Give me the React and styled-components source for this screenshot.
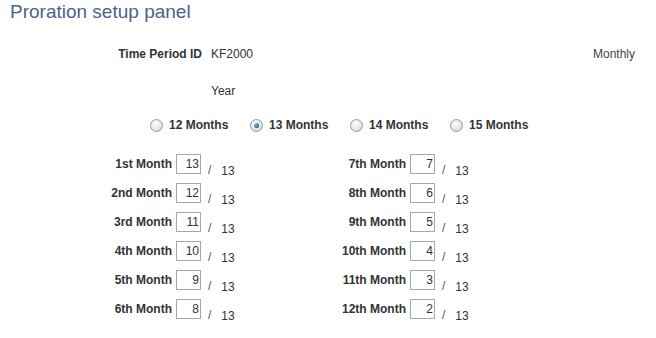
import React from "react";
import styled, { createGlobalStyle } from "styled-components";

const Global = createGlobalStyle`
  html, body { margin: 0; padding: 0; background: #fff; }
  body { font-family: Arial, "Liberation Sans", sans-serif; color: #333; }
`;

const Page = styled.div`
  width: 656px;
  height: 338px;
  box-sizing: border-box;
  padding: 1px 21px 0 10px;
`;

const Title = styled.h1`
  margin: 0;
  font-size: 19px;
  font-weight: normal;
  line-height: 22px;
  color: #4d618c;
`;

const InfoRow = styled.div`
  display: flex;
  align-items: center;
  height: 20px;
  margin-top: ${(p) => p.$top}px;
  font-size: 12px;
`;

const InfoLabel = styled.span`
  width: 192px;
  text-align: right;
  font-weight: bold;
  color: #333;
`;

const InfoValue = styled.span`
  margin-left: 9px;
  color: #333;
  flex: 1;
`;

const RightValue = styled.span`
  color: #444;
`;

const RadioRow = styled.div`
  display: flex;
  margin-top: 14px;
  padding-left: 140px;
  height: 20px;
  align-items: center;
`;

const RadioOption = styled.label`
  display: flex;
  align-items: center;
  width: 100px;
  font-size: 12px;
  font-weight: bold;
  color: #333;
`;

const RadioDot = styled.span`
  width: 11px;
  height: 11px;
  border-radius: 50%;
  border: 1px solid #9a9a9a;
  background: radial-gradient(circle at 40% 35%, #ffffff 0%, #e6e6e6 55%, #c8c8c8 100%);
  margin-right: 6px;
  display: flex;
  align-items: center;
  justify-content: center;
  box-sizing: content-box;
  &::after {
    content: "";
    display: ${(p) => (p.$checked ? "block" : "none")};
    width: 5px;
    height: 5px;
    border-radius: 50%;
    background: radial-gradient(circle at 35% 35%, #7fc4f2 0%, #1f6fb8 60%, #0b3f73 100%);
  }
`;

const MonthGrid = styled.div`
  display: grid;
  grid-template-columns: 234px 234px;
  grid-auto-flow: column;
  grid-template-rows: repeat(6, 29px);
  margin-top: 19px;
  padding-left: 90px;
`;

const MonthCell = styled.div`
  display: flex;
  align-items: flex-start;
  font-size: 12px;
`;

const MonthLabel = styled.span`
  width: 72px;
  text-align: right;
  font-weight: bold;
  color: #333;
  line-height: 20px;
`;

const MonthInput = styled.div`
  width: 22px;
  height: 18px;
  margin-left: 4px;
  border: 1px solid #a8a8a8;
  text-align: right;
  padding-right: 1px;
  box-sizing: content-box;
  line-height: 18px;
  font-size: 12px;
  color: #333;
`;

const Slash = styled.span`
  margin-left: 7px;
  margin-top: 9px;
  line-height: 14px;
  color: #555;
`;

const Total = styled.span`
  margin-left: 10px;
  margin-top: 10px;
  line-height: 14px;
  color: #333;
`;

const ordinals = ["1st","2nd","3rd","4th","5th","6th","7th","8th","9th","10th","11th","12th"];
const values = [13,12,11,10,9,8,7,6,5,4,3,2];

export default function App() {
  return (
    <>
      <Global />
      <Page>
        <Title>Proration setup panel</Title>
        <InfoRow $top={21}>
          <InfoLabel>Time Period ID</InfoLabel>
          <InfoValue>KF2000</InfoValue>
          <RightValue>Monthly</RightValue>
        </InfoRow>
        <InfoRow $top={17}>
          <InfoLabel />
          <InfoValue>Year</InfoValue>
        </InfoRow>
        <RadioRow>
          {[12, 13, 14, 15].map((n) => (
            <RadioOption key={n}>
              <RadioDot $checked={n === 13} />
              {n} Months
            </RadioOption>
          ))}
        </RadioRow>
        <MonthGrid>
          {ordinals.map((o, i) => (
            <MonthCell key={o}>
              <MonthLabel>{o} Month</MonthLabel>
              <MonthInput>{values[i]}</MonthInput>
              <Slash>/</Slash>
              <Total>13</Total>
            </MonthCell>
          ))}
        </MonthGrid>
      </Page>
    </>
  );
}
